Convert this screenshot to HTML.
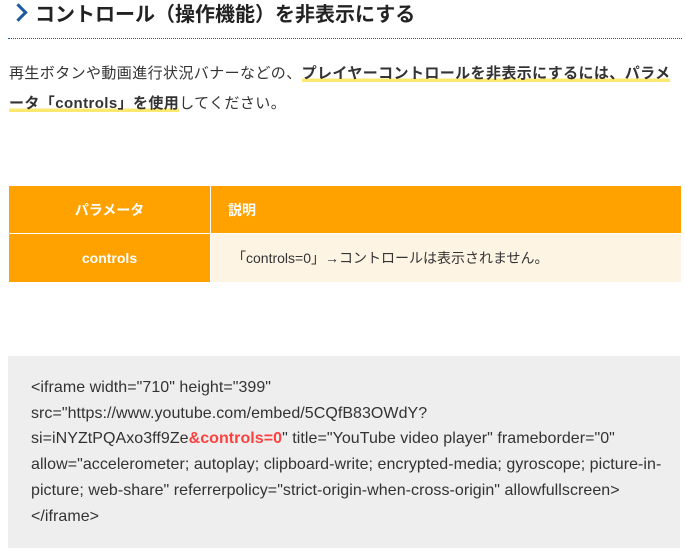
<!DOCTYPE html>
<html><head><meta charset="utf-8"><style>
body{margin:0;background:#fff;width:685px;height:552px;overflow:hidden;font-family:"Liberation Sans","Noto Sans CJK JP",sans-serif;color:#333}
h2{position:absolute;left:12px;top:0;margin:0;font-size:20px;font-weight:bold;line-height:30px;color:#222}
h2 .arr{display:inline-block;width:10px;height:10px;border-right:3px solid #1e5aa0;border-top:3px solid #1e5aa0;transform:rotate(45deg);margin-right:10px;position:relative;top:-2px}
.dot{position:absolute;left:8px;right:3px;top:38px;border-top:1px dotted #1e5aa0}
.p{position:absolute;left:9px;top:59px;width:672px;font-size:15px;line-height:30px;color:#333;letter-spacing:0.4px}
.hl{font-weight:bold;background:linear-gradient(transparent 80%,#fbe870 80%)}
table{position:absolute;left:9px;top:186px;width:672px;border-collapse:collapse;font-size:14px}
td{height:47px;padding:0}
.h td{background:#ffa200;color:#fff;font-weight:bold}
.c1{width:201px;text-align:center;border-right:1px solid #fff}
.c2{padding-left:17px}
.r td{border-top:1px solid #fff;height:48px}
.r .c2{background:#fdf4e4;color:#333;font-weight:normal;padding-left:21px}
.r .c1{background:#ffa200;color:#fff;font-weight:bold}
.code{position:absolute;left:8px;top:356px;width:672px;height:192px;background:#eeeeee}
.code div{position:absolute;left:23px;top:19px;font-size:16px;line-height:25.7px;color:#333;white-space:nowrap;letter-spacing:0.05px}
.red{color:#ff4040;font-weight:bold}
</style></head><body>
<h2><span class="arr"></span>コントロール（操作機能）を非表示にする</h2>
<div class="dot"></div>
<div class="p">再生ボタンや動画進行状況バナーなどの、<span class="hl">プレイヤーコントロールを非表示にするには、パラメ<br>ータ「controls」を使用</span>してください。</div>
<table>
<tr class="h"><td class="c1">パラメータ</td><td class="c2">説明</td></tr>
<tr class="r"><td class="c1">controls</td><td class="c2">「controls=0」→コントロールは表示されません。</td></tr>
</table>
<div class="code"><div>&lt;iframe width="710" height="399"<br>src="https://www.youtube.com/embed/5CQfB83OWdY?<br>si=iNYZtPQAxo3ff9Ze<span class="red">&amp;controls=0</span>" title="YouTube video player" frameborder="0"<br>allow="accelerometer; autoplay; clipboard-write; encrypted-media; gyroscope; picture-in-<br>picture; web-share" referrerpolicy="strict-origin-when-cross-origin" allowfullscreen&gt;<br>&lt;/iframe&gt;</div></div>
</body></html>
